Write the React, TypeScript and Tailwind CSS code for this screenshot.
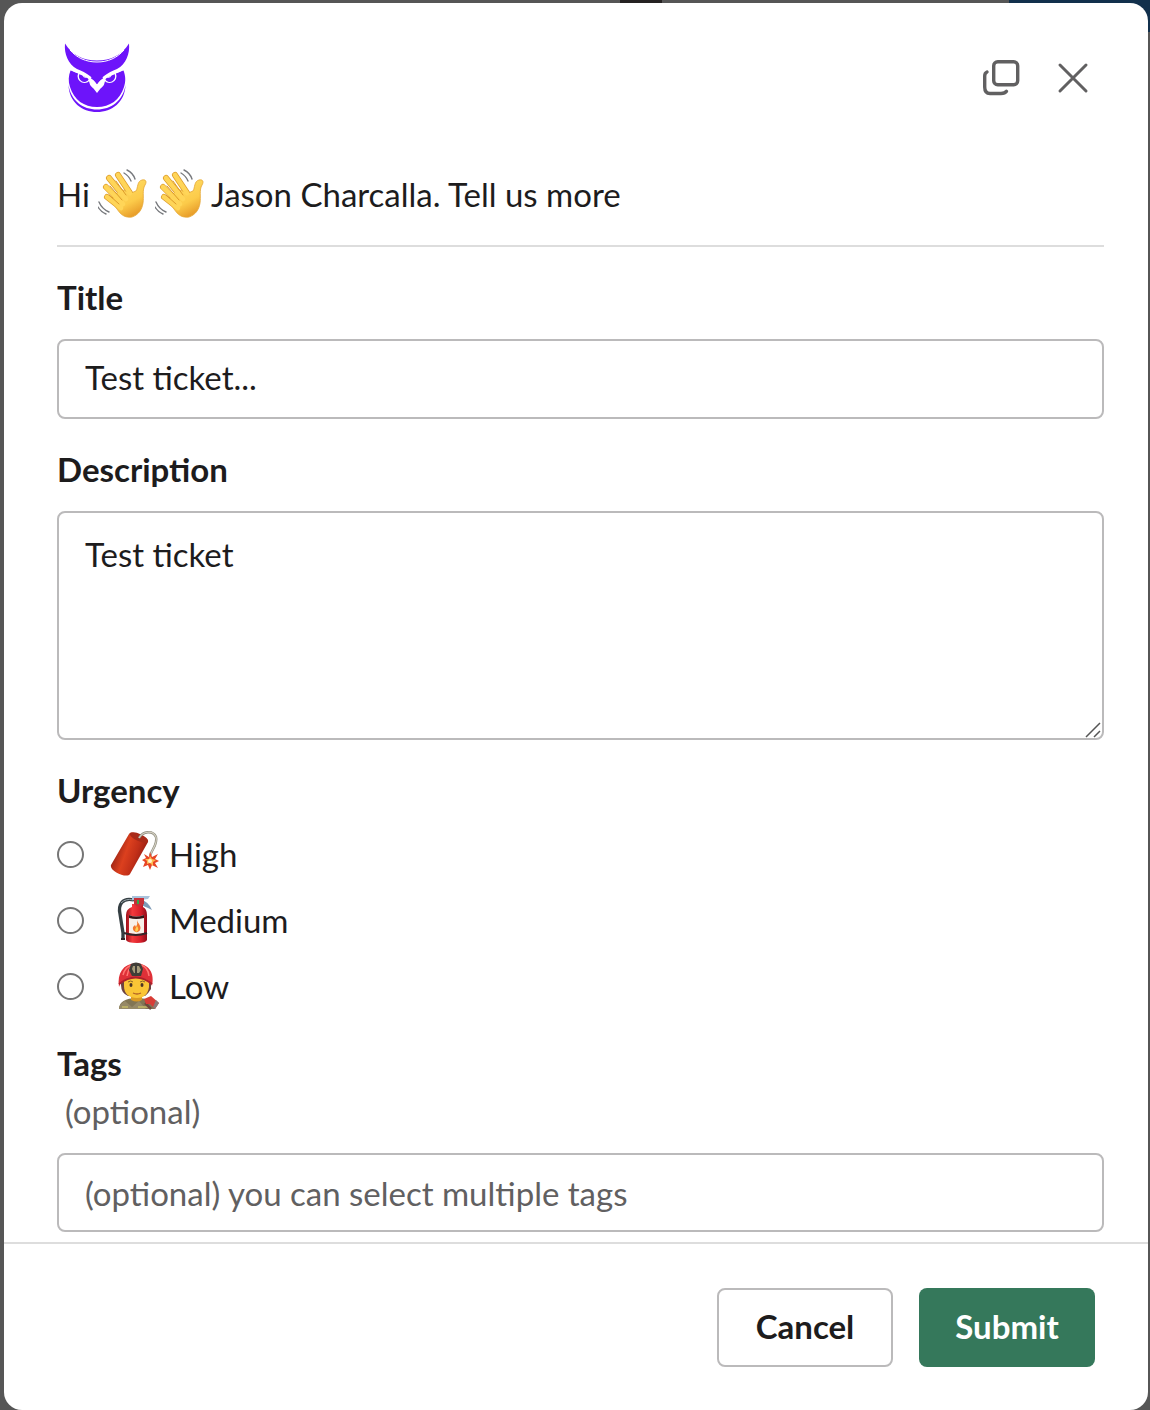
import { useState } from "react";
import type { ReactNode } from "react";

function OwlLogo() {
  return (
    <svg viewBox="0 0 66 70" className="h-[70px] w-[66px]" role="img" aria-label="Owl">
      <path d="M6.500 27.500 L33 36 L59.500 27.500 C61.500 33 62 38 60 44 C56 57 46 64 33 64 C20 64 10 57 6 44 C4 38 4.500 33 6.500 27.500Z" fill="#6d14fa" />
      <path d="M4.500 42 C7 58 19 66.500 33 66.500 C47 66.500 59 58 61.500 42 C61 59 48 69 33 69 C18 69 5 59 4.500 42Z" fill="#6d14fa" />
      <circle cx="20.500" cy="33" r="7" fill="#fff" />
      <circle cx="45.500" cy="33" r="7" fill="#fff" />
      <path d="M15.500 31 A5 5 0 1 0 25 36Z" fill="#6d14fa" />
      <path d="M50.500 31 A5 5 0 1 1 41 36Z" fill="#6d14fa" />
      <path d="M18.500 32.500 Q20 35.500 22.500 34.500Z M47.500 32.500 Q46 35.500 43.500 34.500Z" fill="#fff" />
      <path d="M24 34 Q29 36 33 41 Q37 36 42 34 L40.500 40 C40 43 38 44 36.500 45.500 L33 50 L29.500 45.500 C28 44 26 43 25.500 40Z" fill="#fff" />
      <path
        d="M1 0.500 C8 12 19 17.500 33 17.500 C47 17.500 58 12 65 0.500 C66 11 62 21 53 26 C43 30 37 34 33 41.500 C29 34 23 30 13 26 C4 21 0 11 1 0.500Z"
        fill="#6d14fa"
      />
      <path d="M3 22 Q8 28 15 30 Q27 34 33 43 Q39 34 51 30 Q58 28 63 22" fill="none" stroke="#fff" strokeWidth="1.500" />
      <path d="M6 7 C13 15 22 19 33 19 C44 19 53 15 60 7" fill="none" stroke="#fff" strokeWidth="1" />
    </svg>
  );
}

function Wave() {
  return (
    <svg viewBox="0 0 50 50" className="h-[50px] w-[50px] shrink-0" role="img" aria-label="waving hand">
      <defs>
        <linearGradient id="skin" x1="0" y1="0" x2="0.5" y2="1">
          <stop offset="0" stopColor="#ffe16c" />
          <stop offset="0.7" stopColor="#fccb4a" />
          <stop offset="1" stopColor="#e9a02c" />
        </linearGradient>
      </defs>
      <path d="M20 6 L32 24 M11 9 L28 30 M8 18 L25 35 M9 28 L23 39" stroke="#dd9c2b" strokeLinecap="round" strokeWidth="6" fill="none" />
      <path
        d="M22 20 L33 24 L38 22 C40 19 39 12 44 11 C48 10 49 13 47 16 C44 21 46 28 45 34 C44 41 40 46 34 48 C27 49 23 46 19 40 L13 32Z"
        fill="url(#skin)"
        stroke="#e4a634"
        strokeWidth="0.8"
      />
      <path d="M20 6 L32 24 M11 9 L28 30 M8 18 L25 35 M9 28 L23 39" stroke="#ffd558" strokeWidth="4.600" strokeLinecap="round" fill="none" />
      <path d="M18 12 L28 26 M12 17 L24 31 M11 26 L21 35" stroke="#dd9c2b" strokeWidth="1" strokeLinecap="round" />
      <path d="M26 4 Q31 7 33 12 M29 1 Q35 4 37 10 M1 33 Q4 40 11 43 M0 38 Q3 43 8 45" stroke="#77797d" strokeWidth="1.400" strokeLinecap="round" fill="none" />
    </svg>
  );
}

function Firecracker() {
  return (
    <svg viewBox="0 0 50 50" className="h-[50px] w-[50px]" aria-hidden="true">
      <defs>
        <linearGradient id="cracker" x1="0" y1="0.3" x2="1" y2="0.7">
          <stop offset="0" stopColor="#7d1710" />
          <stop offset="0.4" stopColor="#dc401e" />
          <stop offset="0.65" stopColor="#c12f18" />
          <stop offset="1" stopColor="#7d120e" />
        </linearGradient>
      </defs>
      <path d="M19 5 C21 1 39 8 38 13 L20 45 C17 50 -1 42 1 36Z" fill="url(#cracker)" />
      <ellipse cx="29" cy="8.500" rx="10" ry="3.500" transform="rotate(24 29 8.500)" fill="#a92a18" />
      <path d="M29 9 C33 2 43 1 46 8 C48 15 42 20 40 27" fill="none" stroke="#8b897c" strokeWidth="2.400" />
      <path d="M29 9 C33 2 43 1 46 8 C48 15 42 20 40 27" fill="none" stroke="#d4d0c2" strokeWidth="1.200" />
      <path d="M40 23 L42 28 L48 25 L45 30 L49 32 L45 34 L48 39 L42 36 L40 41 L38 36 L33 38 L35 33 L32 31 L36 29 L34 25 L39 28Z" fill="#e74525" />
      <path d="M40 27 L42 30 L46 31 L43 33 L43 37 L40 34 L37 35 L37 32 L35 30 L39 30Z" fill="#ffb74b" />
      <circle cx="40" cy="32" r="2" fill="#fff5ca" />
    </svg>
  );
}

function Extinguisher() {
  return (
    <svg viewBox="0 0 50 50" className="h-[50px] w-[50px]" aria-hidden="true">
      <defs>
        <linearGradient id="tank">
          <stop offset="0" stopColor="#9c101a" />
          <stop offset="0.3" stopColor="#f43a3d" />
          <stop offset="0.7" stopColor="#d71f2a" />
          <stop offset="1" stopColor="#8f0b19" />
        </linearGradient>
      </defs>
      <path d="M24 5 C12 2 8 10 10 19 L13 38 V44" fill="none" stroke="#353f43" strokeWidth="3.300" />
      <path d="M11 8 Q16 3 23 5" fill="none" stroke="#9ba6ac" strokeWidth="1" />
      <path d="M22 1 H40 L38 4 L31 5 H22Z" fill="#a9c2db" />
      <path d="M31 5 Q38 6 42 15 L38 13 L31 10Z" fill="#7e9bb7" />
      <path d="M22 9 H33 V12 Q37 14 37 20 V45 Q36 48 27 48 Q17 48 16 45 V20 Q16 14 22 12Z" fill="url(#tank)" />
      <path d="M24 3 H34 V9 Q29 14 24 9Z" fill="#c63038" />
      <path d="M28 5 V9" stroke="#34a748" strokeWidth="2" />
      <path d="M19 20 Q26 23 34 20 V38 Q26 40 19 38Z" fill="#f7f0e9" />
      <path d="M19 20 Q26 23 34 20 V23 Q26 25 19 23Z" fill="#311619" />
      <path d="M27 25 C28 29 32 31 30 35 C28 39 22 37 23 32 L25 30 L26 32 Q28 29 27 25Z" fill="#f2772b" />
      <path d="M27 31 Q30 35 26 37 Q24 35 27 31Z" fill="#ffd054" />
      <path d="M14 38 Q26 42 37 38 M11 44 H15" fill="none" stroke="#34262a" strokeWidth="2" />
    </svg>
  );
}

function Firefighter() {
  return (
    <svg viewBox="0 0 50 50" className="h-[50px] w-[50px]" aria-hidden="true">
      <path d="M9 48 C9 41 15 37 27 37 C39 37 44 41 45 48Z" fill="#817554" />
      <path d="M15 40 L22 46 L29 40 L36 48 H9 Q9 43 15 40Z" fill="#968967" />
      <path d="M12 46 H18 M28 46 H38" stroke="#c5bb67" strokeWidth="1.500" />
      <path d="M21 34 H32 V39 Q27 42 21 39Z" fill="#d99924" />
      <path d="M11 18 H41 V28 Q38 33 35 35 H18 Q11 32 11 24Z" fill="#6c4242" />
      <path d="M14 19 Q26 12 39 19 V26 C38 34 33 37 27 37 C19 37 14 33 14 25Z" fill="#fac536" />
      <ellipse cx="21" cy="24" rx="1.500" ry="2" fill="#4b3425" />
      <ellipse cx="32" cy="24" rx="1.500" ry="2" fill="#4b3425" />
      <path d="M18 21 Q21 19 23 21 M30 21 Q33 19 35 21" fill="none" stroke="#8b642a" />
      <path d="M23 32 Q27 34 31 32" fill="none" stroke="#b56424" strokeWidth="1.300" />
      <path d="M9 26 C7 12 13 3 26 2 C39 3 45 12 42 25 C40 18 34 17 26 17 C18 17 12 18 9 26Z" fill="#df3038" />
      <path d="M13 14 Q15 6 22 4 Q18 9 17 15 M31 4 Q38 6 39 15" stroke="#ff7772" strokeWidth="1.500" fill="none" />
      <path d="M9 23 Q26 10 42 23" stroke="#ad202b" strokeWidth="2" fill="none" />
      <path d="M21 3 Q26 0 31 3 L33 8 L31 15 H22 L19 9Z" fill="#403d37" />
      <path d="M23 5 H29 L31 9 L29 12 H24L22 8Z" fill="#a69a79" />
      <path d="M26 5 V13" stroke="#403d37" strokeWidth="2" />
      <path d="M35 42 L41 48" stroke="#6d493c" strokeWidth="2.500" />
      <path d="M34 38 L41 35 L49 42 L45 48 L40 43 L36 43Z" fill="#d83d36" />
      <path d="M46 39 L49 42 L45 48 L43 46Z" fill="#8b7b78" />
    </svg>
  );
}

const urgencies: { name: string; icon: ReactNode }[] = [
  { name: "High", icon: <Firecracker /> },
  { name: "Medium", icon: <Extinguisher /> },
  { name: "Low", icon: <Firefighter /> },
];

export default function App() {
  const [urgency, setUrgency] = useState("");
  return (
    <div className="relative flex min-h-screen flex-col overflow-hidden bg-[#565656] pt-[3px] pr-[2px] pl-1 font-['Lato',sans-serif] text-[33px] leading-[48px] text-[#1d1c1d]">
      <div aria-hidden="true" className="absolute inset-x-0 top-0 h-8 overflow-hidden">
        <div className="absolute top-0 right-0 h-8 w-[141px] bg-[#12304c]" />
        <div className="absolute top-0 left-[620px] h-2 w-[42px] bg-[#252222]" />
      </div>
      <main role="dialog" aria-label="New ticket" className="relative flex flex-1 flex-col rounded-[18px] bg-white">
        <header className="flex items-start justify-between pt-10 pr-[55px] pl-[60px]">
          <OwlLogo />
          <div className="flex gap-8 pt-[15px]">
            <button type="button" aria-label="Open in new window" className="h-10 w-10">
              <svg viewBox="0 0 40 40" className="h-10 w-10" fill="none" stroke="#616061" strokeWidth="3.400" strokeLinecap="round">
                <rect x="12.700" y="3.700" width="24" height="23" rx="4" />
                <path d="M6 14 Q3.700 15 3.700 18 V29 Q3.700 35.500 9 35.500 H20 Q24 35.500 25.500 33.300" />
              </svg>
            </button>
            <button type="button" aria-label="Close" className="h-10 w-10">
              <svg viewBox="0 0 40 40" className="h-10 w-10" fill="none" stroke="#616061" strokeWidth="3" strokeLinecap="round">
                <path d="M7 7 L33 33 M33 7 L7 33" />
              </svg>
            </button>
          </div>
        </header>

        <form id="ticket" className="flex flex-col pt-14 pr-11 pb-[10px] pl-[53px]">
          <div className="flex items-center border-b-2 border-[#dddddd] pb-[26px]">
            <span className="pr-2">Hi</span>
            <span className="flex gap-[7px] pr-[6px]">
              <Wave />
              <Wave />
            </span>
            <span>Jason Charcalla. Tell us more</span>
          </div>

          <label htmlFor="title" className="pt-[26px] pb-[18px] font-bold">Title</label>
          <input id="title" defaultValue="Test ticket..." className="h-20 w-full rounded-lg border-2 border-[#bbbabb] px-[26px] pb-1 outline-none" />

          <label htmlFor="description" className="pt-[26px] pb-[18px] font-bold">Description</label>
          <div className="relative">
            <textarea id="description" defaultValue="Test ticket" className="block h-[229px] w-full resize-none rounded-lg border-2 border-[#bbbabb] px-[26px] py-[17px] outline-none" />
            <svg viewBox="0 0 18 18" className="pointer-events-none absolute right-[2px] bottom-[1px] h-[18px] w-[18px]" stroke="#555" strokeWidth="1.500" aria-hidden="true">
              <path d="M2 16 L16 2 M10 16 L16 10" />
            </svg>
          </div>

          <fieldset className="pt-[26px]">
            <legend className="float-left w-full font-bold">Urgency</legend>
            <div className="clear-both flex flex-col gap-4 pt-[15px]">
              {urgencies.map(({ name, icon }) => (
                <label key={name} className="flex h-[50px] items-center">
                  <input
                    type="radio"
                    name="urgency"
                    checked={urgency === name}
                    onChange={() => setUrgency(name)}
                    className="mr-[26px] h-[27px] w-[27px] appearance-none rounded-full border-2 border-[#767676] bg-white checked:border-8"
                  />
                  {icon}
                  <span className="pl-[9px]">{name}</span>
                </label>
              ))}
            </div>
          </fieldset>

          <label htmlFor="tags" className="pt-7 pb-[18px]">
            <span className="block font-bold">Tags</span>
            <span className="block pl-2 text-[#616061]">(optional)</span>
          </label>
          <input id="tags" placeholder="(optional) you can select multiple tags" className="h-[79px] w-full rounded-lg border-2 border-[#bbbabb] px-[26px] outline-none placeholder:text-[#616061]" />
        </form>

        <footer className="flex justify-end gap-[26px] border-t-2 border-[#dddddd] pt-11 pr-[53px] pb-10 font-bold">
          <button type="button" className="h-[79px] w-44 rounded-lg border-2 border-[#bbbabb] pb-1">Cancel</button>
          <button type="submit" form="ticket" className="h-[79px] w-44 rounded-lg bg-[#35785b] pb-1 text-white">Submit</button>
        </footer>
      </main>
    </div>
  );
}
